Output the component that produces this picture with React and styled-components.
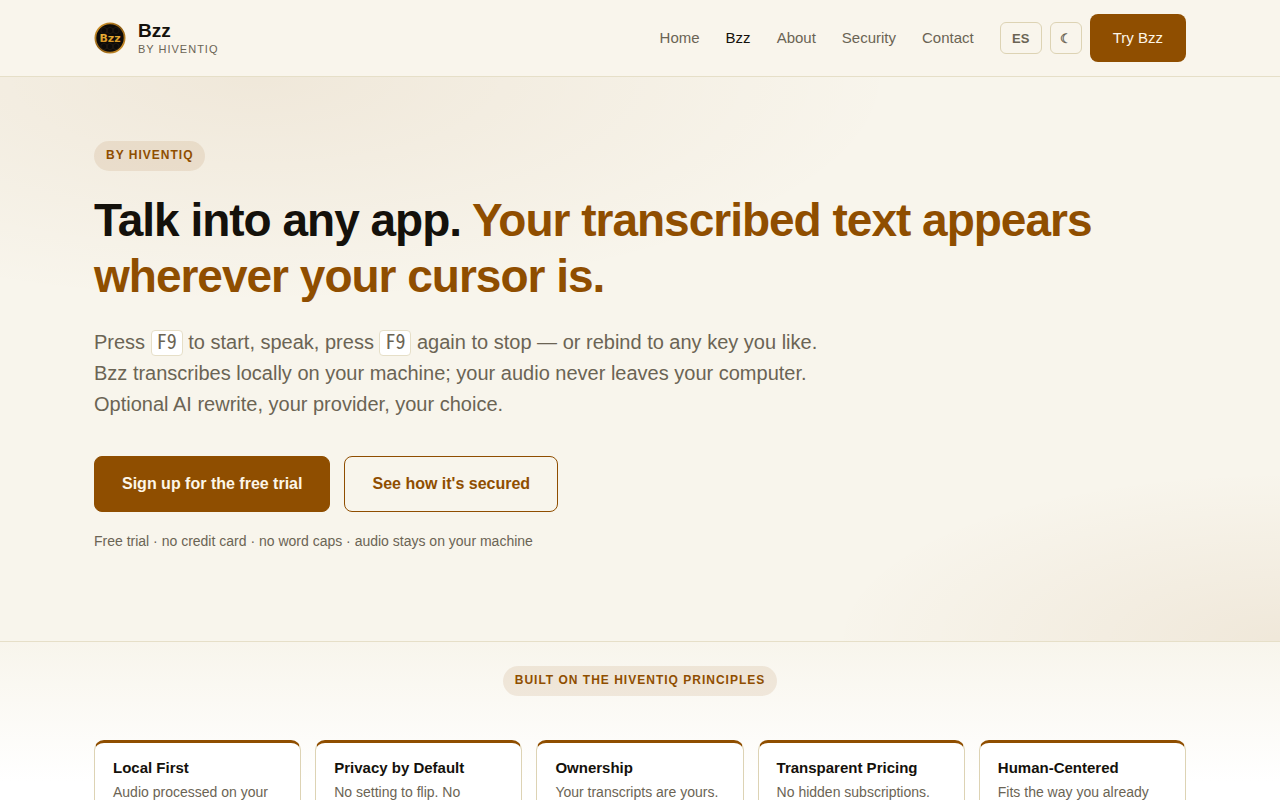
import React from "react";
import styled, { createGlobalStyle } from "styled-components";

const links = ["Home", "Bzz", "About", "Security", "Contact"];

const principles = [
  { title: "Local First", text: "Audio processed on your" },
  { title: "Privacy by Default", text: "No setting to flip. No" },
  { title: "Ownership", text: "Your transcripts are yours." },
  { title: "Transparent Pricing", text: "No hidden subscriptions." },
  { title: "Human-Centered", text: "Fits the way you already" },
];

const Logo = () => (
  <svg width="32" height="32" viewBox="0 0 32 32" aria-hidden="true">
    <defs>
      <linearGradient id="ring" x1="0" y1="0" x2="1" y2="1">
        <stop offset="0" stopColor="#e0a030" />
        <stop offset="0.5" stopColor="#8a5a12" />
        <stop offset="1" stopColor="#d8982c" />
      </linearGradient>
      <linearGradient id="gold" x1="0" y1="0" x2="0" y2="1">
        <stop offset="0" stopColor="#f3b83c" />
        <stop offset="1" stopColor="#c98a1e" />
      </linearGradient>
    </defs>
    <circle
      cx="16"
      cy="16"
      r="14.6"
      fill="#0d0b09"
      stroke="url(#ring)"
      strokeWidth="1.8"
    />
    <path
      d="M10 5l3 2v3l-3 2-3-2V7zM16 5l3 2v3l-3 2-3-2V7zM22 5l3 2v3l-3 2-3-2V7zM10 21l3 2v3l-3 2-3-2v-3zM16 21l3 2v3l-3 2-3-2v-3zM22 21l3 2v3l-3 2-3-2v-3z"
      fill="none"
      stroke="#2b2317"
      strokeWidth="0.6"
    />
    <text
      x="16"
      y="20"
      textAnchor="middle"
      fontFamily="DejaVu Sans, sans-serif"
      fontSize="11"
      fontWeight="700"
      fill="url(#gold)"
    >
      Bzz
    </text>
  </svg>
);

const App = () => {
  return (
    <>
      <GlobalStyle />
      <Header>
        <HeaderInner>
          <Brand href="#">
            <Logo />
            <span>
              <BrandName>Bzz</BrandName>
              <BrandBy>BY HIVENTIQ</BrandBy>
            </span>
          </Brand>
          <Nav>
            <NavLinks>
              {links.map((link) => (
                <NavLink key={link} href="#" $active={link === "Bzz"}>
                  {link}
                </NavLink>
              ))}
            </NavLinks>
            <Actions>
              <Toggle type="button" $wide>
                ES
              </Toggle>
              <Toggle type="button" aria-label="Toggle theme">
                ☾
              </Toggle>
              <TryLink href="#">Try Bzz</TryLink>
            </Actions>
          </Nav>
        </HeaderInner>
      </Header>

      <Hero>
        <Container>
          <Pill>BY HIVENTIQ</Pill>
          <Title>
            Talk into any app.{" "}
            <span>Your transcribed text appears wherever your cursor is.</span>
          </Title>
          <Lead>
            Press <Key>F9</Key> to start, speak, press <Key>F9</Key> again to
            stop — or rebind to any key you like. Bzz transcribes locally on
            your machine; your audio never leaves your computer. Optional AI
            rewrite, your provider, your choice.
          </Lead>
          <Buttons>
            <Button href="#" $primary>
              Sign up for the free trial
            </Button>
            <Button href="#">See how it's secured</Button>
          </Buttons>
          <Note>
            Free trial · no credit card · no word caps · audio stays on your
            machine
          </Note>
        </Container>
      </Hero>

      <Principles>
        <Container>
          <PillRow>
            <Pill>BUILT ON THE HIVENTIQ PRINCIPLES</Pill>
          </PillRow>
          <Grid>
            {principles.map((item) => (
              <Card key={item.title}>
                <h3>{item.title}</h3>
                <p>{item.text}</p>
              </Card>
            ))}
          </Grid>
        </Container>
      </Principles>
    </>
  );
};

export default App;

const GlobalStyle = createGlobalStyle`
  :root {
    --bg: #f9f5ec;
    --text: #14110b;
    --muted: #6b6454;
    --accent: #8f4e00;
    --line: #e6dfc8;
    --line-strong: #ddd3b4;
  }
  * {
    box-sizing: border-box;
  }
  body {
    margin: 0;
    background: var(--bg);
    color: var(--text);
    font-family: "Liberation Sans", Arial, sans-serif;
    font-size: 16px;
  }
  a {
    text-decoration: none;
  }
`;

const Container = styled.div`
  max-width: 1140px;
  margin: 0 auto;
  padding: 0 24px;
`;

const Header = styled.header`
  background: var(--bg);
  border-bottom: 1px solid var(--line);
`;

const HeaderInner = styled(Container)`
  display: flex;
  align-items: center;
  justify-content: space-between;
  padding: 14px 24px;
`;

const Brand = styled.a`
  display: flex;
  align-items: center;
  gap: 12px;
  color: var(--text);
`;

const BrandName = styled.span`
  display: block;
  font-size: 19px;
  line-height: 22px;
  font-weight: 700;
`;

const BrandBy = styled.span`
  display: block;
  font-size: 11px;
  line-height: 14px;
  letter-spacing: 1px;
  color: var(--muted);
`;

const Nav = styled.nav`
  display: flex;
  align-items: center;
  gap: 26px;
`;

const NavLinks = styled.div`
  display: flex;
  gap: 26px;
`;

const NavLink = styled.a`
  font-size: 15px;
  line-height: 20px;
  color: ${(props) => (props.$active ? "var(--text)" : "var(--muted)")};
`;

const Actions = styled.div`
  display: flex;
  align-items: center;
  gap: 8px;
`;

const Toggle = styled.button`
  width: ${(props) => (props.$wide ? "42px" : "32px")};
  height: 32px;
  padding: 0;
  border: 1px solid var(--line-strong);
  border-radius: 6px;
  background: transparent;
  color: var(--muted);
  font-family: inherit;
  font-size: 13px;
  font-weight: 700;
`;

const TryLink = styled.a`
  padding: 14px 23px;
  border-radius: 8px;
  background: var(--accent);
  color: #fdf6e8;
  font-size: 15px;
  line-height: 20px;
`;

const Hero = styled.section`
  padding: 64px 0 89px;
  border-bottom: 1px solid var(--line);
  background:
    radial-gradient(
      ellipse 50% 40% at 20% 0%,
      rgba(143, 78, 0, 0.08),
      transparent
    ),
    radial-gradient(
      ellipse 35% 30% at 100% 100%,
      rgba(143, 78, 0, 0.08),
      transparent
    ),
    #f8f5ec;
`;

const Pill = styled.span`
  display: inline-block;
  height: 30px;
  padding: 0 12px;
  border-radius: 15px;
  background: rgba(143, 78, 0, 0.1);
  color: var(--accent);
  font-size: 12px;
  line-height: 28px;
  font-weight: 700;
  letter-spacing: 1px;
  vertical-align: top;
`;

const Title = styled.h1`
  margin: 21px 0 23px;
  font-size: 46px;
  line-height: 56px;
  font-weight: 700;
  letter-spacing: -1px;
  span {
    color: var(--accent);
  }
`;

const Lead = styled.p`
  max-width: 740px;
  margin: 0 0 36px;
  color: var(--muted);
  font-size: 20px;
  line-height: 31px;
`;

const Key = styled.kbd`
  display: inline-block;
  padding: 0 5px 4px;
  border: 1px solid var(--line);
  border-radius: 4px;
  background: #fff;
  font-family: "Noto Sans Mono CJK JP", "Noto Sans Mono CJK SC", monospace;
  font-size: 20px;
  line-height: 20px;
`;

const Buttons = styled.div`
  display: flex;
  flex-wrap: wrap;
  gap: 14px;
`;

const Button = styled.a`
  display: flex;
  align-items: center;
  height: 56px;
  padding: 0 27px;
  border: 1px solid var(--accent);
  border-radius: 8px;
  background: ${(props) => (props.$primary ? "var(--accent)" : "transparent")};
  color: ${(props) => (props.$primary ? "#fdf6e8" : "var(--accent)")};
  font-size: 16px;
  font-weight: 700;
`;

const Note = styled.p`
  margin: 18px 0 0;
  color: var(--muted);
  font-size: 14px;
  line-height: 22px;
`;

const Principles = styled.section`
  padding: 24px 0 64px;
  background: linear-gradient(#f8f5ec, #fff 140px);
`;

const PillRow = styled.div`
  display: flex;
  justify-content: center;
  margin-bottom: 44px;
`;

const Grid = styled.div`
  display: grid;
  grid-template-columns: repeat(5, 1fr);
  gap: 14px;
`;

const Card = styled.article`
  min-height: 130px;
  padding: 14px 18px;
  border: 1px solid var(--line-strong);
  border-top: 3px solid var(--accent);
  border-radius: 10px;
  background: #fff;
  h3 {
    margin: 0;
    font-size: 15px;
    line-height: 22px;
  }
  p {
    margin: 2px 0 0;
    color: var(--muted);
    font-size: 14px;
    line-height: 22px;
  }
`;
